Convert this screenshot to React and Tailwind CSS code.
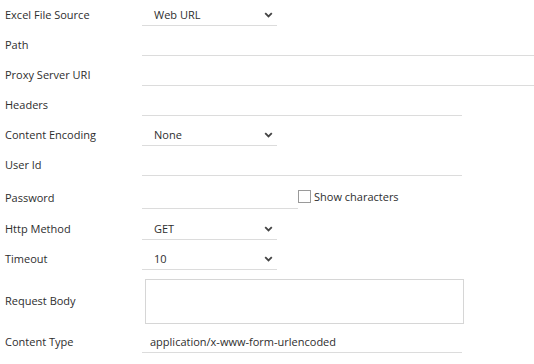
import React from 'react';

function Chevron() {
  return (
    <svg width="9" height="6" viewBox="0 0 9 6" className="text-[#444]">
      <path d="M1.2 1.2 L4.5 4.5 L7.8 1.2" fill="none" stroke="currentColor" strokeWidth="1.8" />
    </svg>
  );
}

function Select({ value }) {
  return (
    <div className="w-[135px] h-[21px] border-b border-[#dcdcdc] flex items-center justify-between pl-[12px] pr-[4px]">
      <span>{value}</span>
      <Chevron />
    </div>
  );
}

function Input({ width, value }) {
  return (
    <div className={`${width} h-[21px] border-b border-[#dcdcdc] flex items-center pl-[8px]`}>
      {value}
    </div>
  );
}

function Row({ label, className = '', children }) {
  return (
    <div className={`flex items-center ${className}`}>
      <div className="w-[142px] pl-[5px]">{label}</div>
      {children}
    </div>
  );
}

export default function App() {
  return (
    <div className="w-[534px] h-[364px] bg-white text-[#2e2e2e] text-[11px] pt-[5px]" style={{ fontFamily: '"Open Sans", sans-serif' }}>
      <Row label="Excel File Source">
        <Select value="Web URL" />
      </Row>
      <Row label="Path" className="mt-[9px]">
        <Input width="w-[392px]" />
      </Row>
      <Row label="Proxy Server URI" className="mt-[9px]">
        <Input width="w-[392px]" />
      </Row>
      <Row label="Headers" className="mt-[9px]">
        <Input width="w-[320px]" />
      </Row>
      <Row label="Content Encoding" className="mt-[9px]">
        <Select value="None" />
      </Row>
      <Row label="User Id" className="mt-[9px]">
        <Input width="w-[320px]" />
      </Row>
      <Row label="Password" className="mt-[12px]">
        <Input width="w-[156px]" />
        <div className="flex items-center self-start mt-[-1px]">
          <div className="w-[13px] h-[13px] border border-[#9a9a9a] bg-white" />
          <span className="ml-[3px] mt-[2px]">Show characters</span>
        </div>
      </Row>
      <Row label="Http Method" className="mt-[10px]">
        <Select value="GET" />
      </Row>
      <Row label="Timeout" className="mt-[9px]">
        <Select value="10" />
      </Row>
      <Row label="Request Body" className="mt-[9px]">
        <div className="ml-[3px] w-[319px] h-[45px] border border-[#d6d6d6]" />
      </Row>
      <Row label="Content Type" className="mt-[8px]">
        <Input width="w-[320px]" value="application/x-www-form-urlencoded" />
      </Row>
    </div>
  );
}
